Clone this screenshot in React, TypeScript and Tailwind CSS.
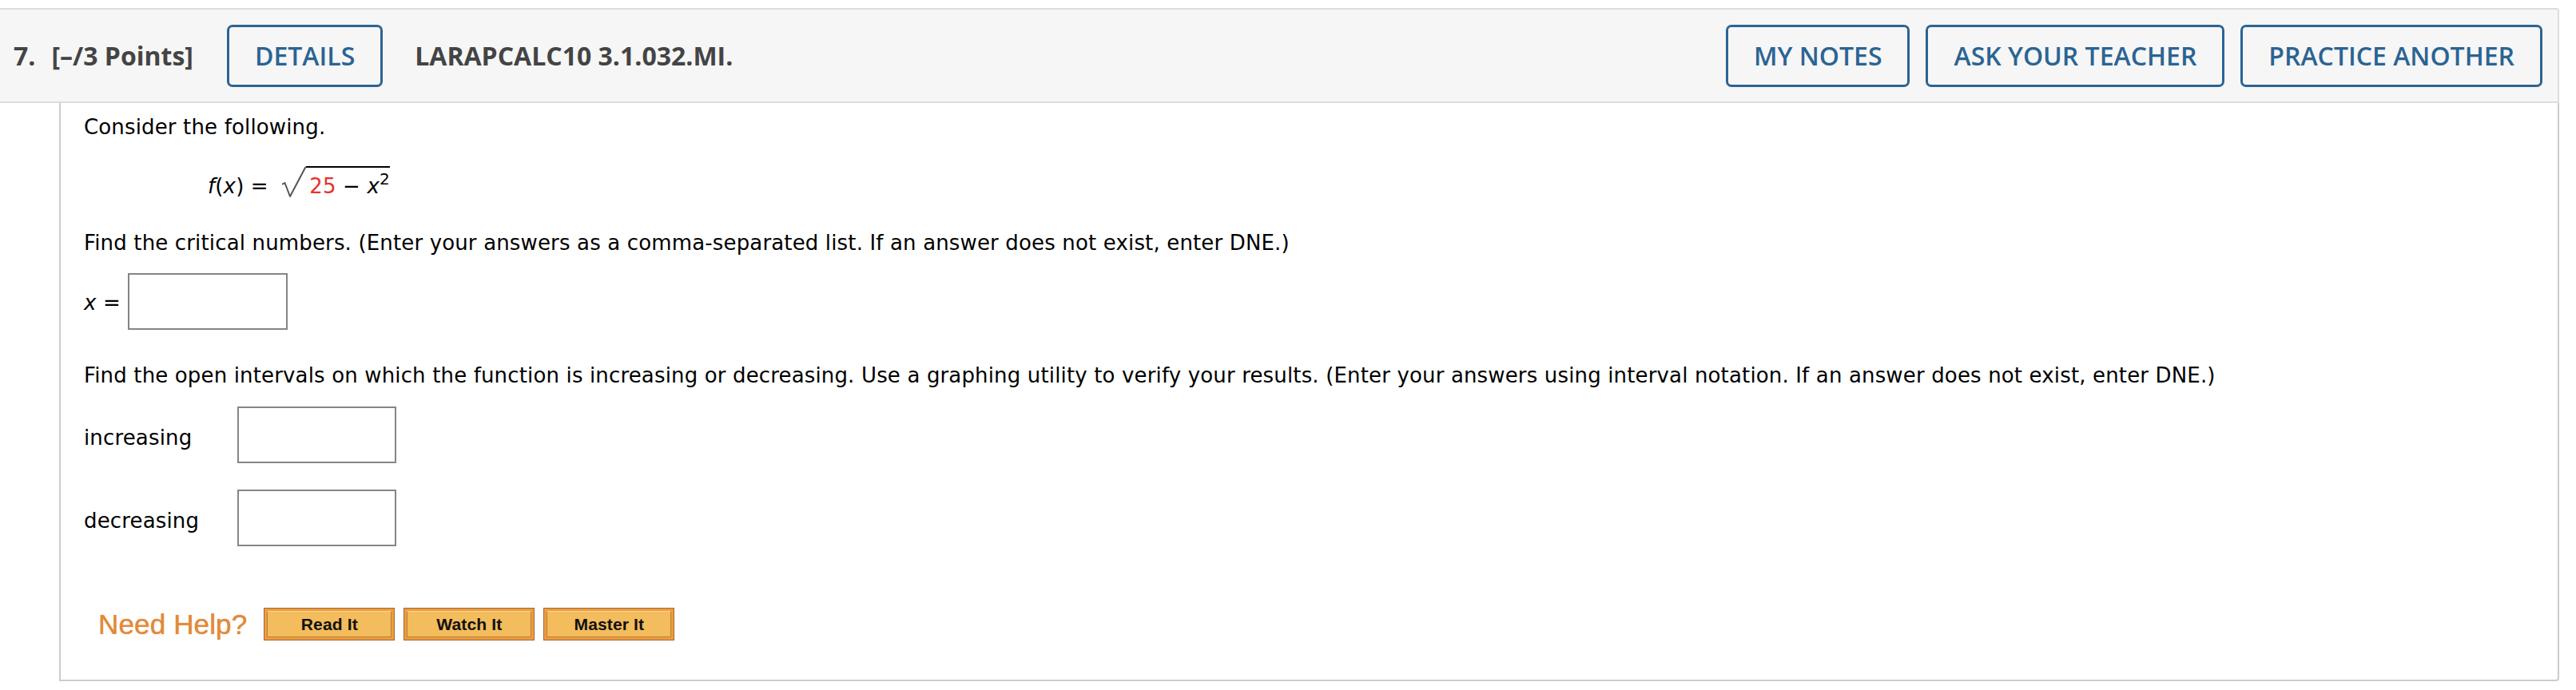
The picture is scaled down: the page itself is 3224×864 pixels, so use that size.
import React from "react";

const headerBtn =
  "h-[78px] px-[32px] border-[3px] border-[#2b6493] rounded-[7px] text-[#2b6493] text-[32px] font-semibold bg-[#f6f6f6] flex items-center justify-center leading-none";

function HelpButton({ label }: { label: string }) {
  return (
    <div className="w-[164px] h-[41px] border border-[#a2692f] bg-[#ee9c3e] p-[3px] flex">
      <div className="flex-1 border border-[#b8803f] border-t-[#f8d9a0] bg-[#f3bc5c] flex items-center justify-center">
        <span className="font-['Liberation_Sans',Arial,sans-serif] font-bold text-[21px] leading-none text-[#111]">
          {label}
        </span>
      </div>
    </div>
  );
}

function InputBox({ w = "w-[200px]" }: { w?: string }) {
  return <div className={`${w} h-[71px] border-2 border-[#858585] bg-white`} />;
}

export default function App() {
  return (
    <div className="pt-[10px] bg-white min-h-[864px]">
      {/* Header */}
      <div className="mr-[21px] h-[119px] border-t-2 border-b-2 border-r-2 border-[#dddddd] rounded-tr-[4px] bg-[#f6f6f6] flex items-center pl-[17px] pr-[19px] font-['Open_Sans',sans-serif]">
        <span className="font-bold text-[32px] text-[#444444] leading-none">7.</span>
        <span className="ml-[20px] font-bold text-[32px] text-[#444444] leading-none">
          [–/3 Points]
        </span>
        <div className={`ml-[42px] ${headerBtn}`}>DETAILS</div>
        <span className="ml-[40px] font-bold text-[32px] text-[#444444] leading-none">
          LARAPCALC10 3.1.032.MI.
        </span>
        <div className="ml-auto flex gap-[20px]">
          <div className={headerBtn}>MY NOTES</div>
          <div className={headerBtn}>ASK YOUR TEACHER</div>
          <div className={headerBtn}>PRACTICE ANOTHER</div>
        </div>
      </div>

      {/* Content */}
      <div className="ml-[74px] mr-[21px] h-[724px] border-l-2 border-r-2 border-b-2 border-[#cccccc] rounded-br-[4px] pl-[29px] pt-[15px] font-['Verdana','DejaVu_Sans',sans-serif] text-[26px] leading-[30px] tracking-[0.15px] text-black">
        <div>Consider the following.</div>

        {/* formula */}
        <div className="mt-[34px] flex items-start pl-[155px] h-[40px]">
          <span className="pt-[10px] leading-[30px] whitespace-pre">
            <i>f</i>(<i>x</i>){" = "}
          </span>
          <svg width="30" height="40" viewBox="0 0 30 40" className="ml-[9px] shrink-0">
            <path d="M0 23 L3.5 21 L10 38 L29.5 1" stroke="#555555" strokeWidth="2" fill="none" strokeLinejoin="round" />
          </svg>
          <span className="border-t-2 border-black pt-[8px] pl-[4px] leading-[30px] whitespace-pre">
            <span className="text-[#e8322a]">25</span>
            {" − "}
            <i>x</i>
            <sup className="text-[20px] relative top-[-11px] align-baseline leading-none">2</sup>
          </span>
        </div>

        <div className="mt-[41px]">
          Find the critical numbers. (Enter your answers as a comma-separated list. If an answer does not exist, enter DNE.)
        </div>

        <div className="mt-[23px] flex items-center">
          <span className="w-[55px] whitespace-pre pt-[2px]">
            <i>x</i> =
          </span>
          <InputBox />
        </div>

        <div className="mt-[42px]">
          Find the open intervals on which the function is increasing or decreasing. Use a graphing utility to verify your results. (Enter your answers using interval notation. If an answer does not exist, enter DNE.)
        </div>

        <div className="mt-[24px] flex items-center">
          <span className="w-[192px] pt-[6px]">increasing</span>
          <InputBox w="w-[199px]" />
        </div>

        <div className="mt-[33px] flex items-center">
          <span className="w-[192px] pt-[6px]">decreasing</span>
          <InputBox w="w-[199px]" />
        </div>

        <div className="mt-[77px] flex items-center ml-[18px]">
          <span className="font-['Liberation_Sans',Arial,sans-serif] text-[35px] leading-none text-[#e2893b] mr-[21px] [text-shadow:0_0_1px_#e2893b]">
            Need Help?
          </span>
          <div className="flex gap-[11px]">
            <HelpButton label="Read It" />
            <HelpButton label="Watch It" />
            <HelpButton label="Master It" />
          </div>
        </div>
      </div>
    </div>
  );
}
